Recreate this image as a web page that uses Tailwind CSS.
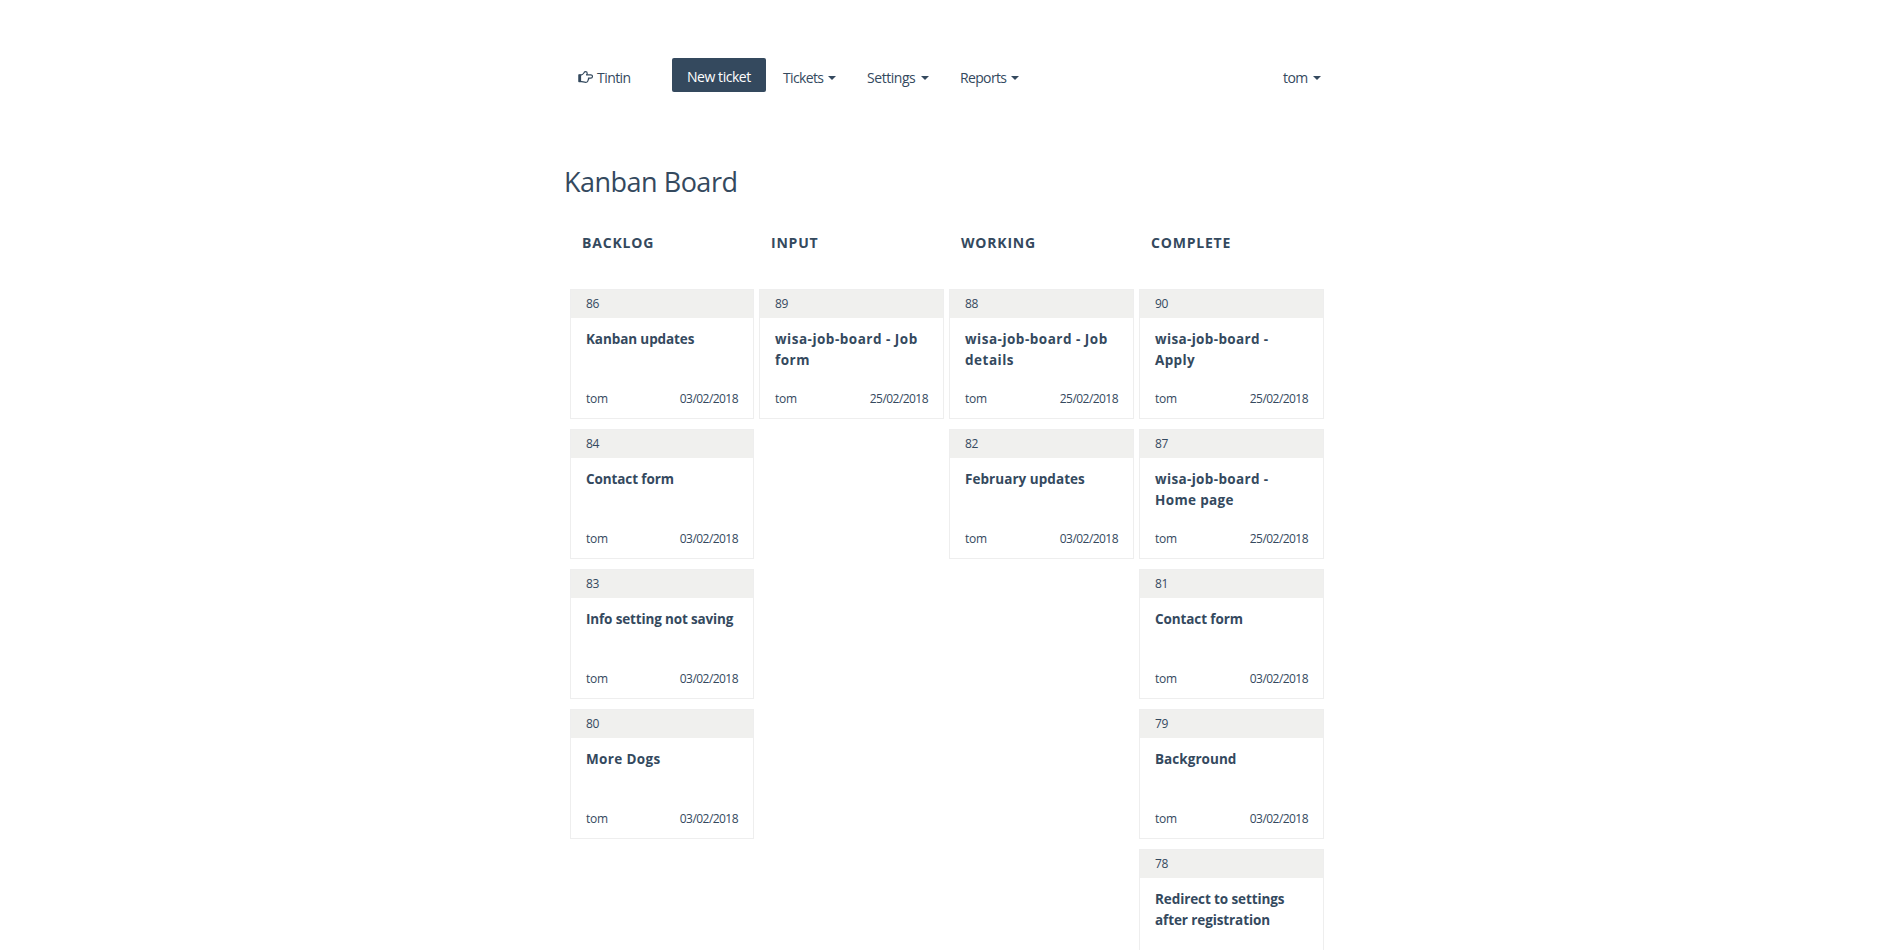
<!DOCTYPE html>
<html lang="en">
<head>
<meta charset="utf-8">
<title>Kanban Board</title>
<script src="https://cdn.jsdelivr.net/npm/@tailwindcss/browser@4"></script>
</head>
<body class="h-[950px] overflow-hidden bg-white font-['Open_Sans','Noto_Sans',sans-serif] text-[#34495e]">
<div class="ml-[565px] w-[768px]">
  <nav class="flex items-start pt-[58px] text-sm leading-[21px] tracking-[-0.55px]">
    <a class="ml-[13px] flex w-[94px] items-start pt-[9px]">
      <svg class="mt-[3px] mr-[4px] h-[14px] w-[15px] shrink-0" viewBox="0 0 14 13" fill="none" stroke="#34495e" stroke-width="1.1" stroke-linejoin="round">
        <path d="M.9 4.5H3.3C4.5 4.5 5.2 3 5.8 2.2C6.2 1.5 6.6 1.5 7 1.5C8.2 1.5 8.6 2 8.6 2.9C8.6 3.5 8.2 4 8 4.5H12A1.5 1.5 0 0 1 12 7.5H9.7C10.2 8.300 9.9 9 9.300 9.300C9.500 10 9.200 10.500 8.800 10.700C8.700 11.400 8 11.500 7.200 11.500C5.500 11.500 4.500 10.800 3.300 10.800H.9Z"/>
        <path d="M.6 4.300H2.900V11H.6Z" fill="#34495e" stroke="none"/>
      </svg>
      <span>Tintin</span>
    </a>
    <a class="mr-[17px] h-[34px] w-[94px] rounded-[2px] bg-[#34495e] pt-2 pl-[15px] tracking-[-0.45px] whitespace-nowrap text-white">New ticket</a>
    <a class="flex w-[84px] pt-[9px]"><span class="w-[45px] tracking-[-0.65px]">Tickets</span><span class="mt-[9px] h-0 border-x-4 border-t-4 border-x-transparent border-t-[#34495e]"></span></a>
    <a class="flex w-[93px] pt-[9px]"><span class="w-[54px] tracking-[-0.45px]">Settings</span><span class="mt-[9px] h-0 border-x-4 border-t-4 border-x-transparent border-t-[#34495e]"></span></a>
    <a class="flex pt-[9px]"><span class="w-[51px] tracking-[-0.65px]">Reports</span><span class="mt-[9px] h-0 border-x-4 border-t-4 border-x-transparent border-t-[#34495e]"></span></a>
    <a class="mr-3 ml-auto flex pt-[9px]"><span class="w-[30px]">tom</span><span class="mt-[9px] h-0 border-x-4 border-t-4 border-x-transparent border-t-[#34495e]"></span></a>
  </nav>
  <h1 class="mt-[70px] -ml-px h-[58px] text-[27px] leading-[40px] tracking-[-0.5px]">Kanban Board</h1>
  <main id="board" class="ml-[5px] grid grid-cols-[184px_185px_185px_185px] items-start gap-[5px]"></main>
</div>
<script>
const wide = 'tracking-[0.5px]', normal = 'tracking-[0.05px]', tight = 'tracking-[-0.1px]', loose = 'tracking-[0.35px]';
const columns = [
  ['Backlog', [
    [86, 'Kanban updates', '03/02/2018', tight],
    [84, 'Contact form', '03/02/2018', tight],
    [83, 'Info setting not saving', '03/02/2018', 'tracking-[-0.15px]'],
    [80, 'More Dogs', '03/02/2018', loose]]],
  ['Input', [
    [89, 'wisa-job-board - Job<br>form', '25/02/2018', wide]]],
  ['Working', [
    [88, 'wisa-job-board - Job<br>details', '25/02/2018', wide],
    [82, 'February updates', '03/02/2018', normal]]],
  ['Complete', [
    [90, 'wisa-job-board -<br>Apply', '25/02/2018', loose],
    [87, 'wisa-job-board -<br>Home page', '25/02/2018', loose],
    [81, 'Contact form', '03/02/2018', tight],
    [79, 'Background', '03/02/2018', normal],
    [78, 'Redirect to settings<br>after registration', '', tight]]]
];
const card = ([id, title, date, spacing]) => `
  <article class="mb-[10px] h-[130px] border border-[#eeeeee]">
    <div class="h-7 bg-[#f0f0ee] pl-[15px] text-xs leading-[27px] tracking-[-0.4px]">${id}</div>
    <h3 class="h-[72px] px-[15px] pt-[11px] text-[13.5px] leading-[21px] font-bold whitespace-nowrap ${spacing}">${title}</h3>
    ${date && `<div class="flex justify-between px-[15px] text-xs leading-[17px]"><span class="tracking-[-0.2px]">tom</span><span class="tracking-[-0.55px]">${date}</span></div>`}
  </article>`;
document.getElementById('board').innerHTML = columns.map(([name, cards]) => `
  <section>
    <h2 class="mb-[35px] h-[34px] pt-[12px] pl-[12px] text-sm leading-[21px] font-bold tracking-[0.8px] uppercase">${name}</h2>
    ${cards.map(card).join('')}
  </section>`).join('');
</script>
</body>
</html>
